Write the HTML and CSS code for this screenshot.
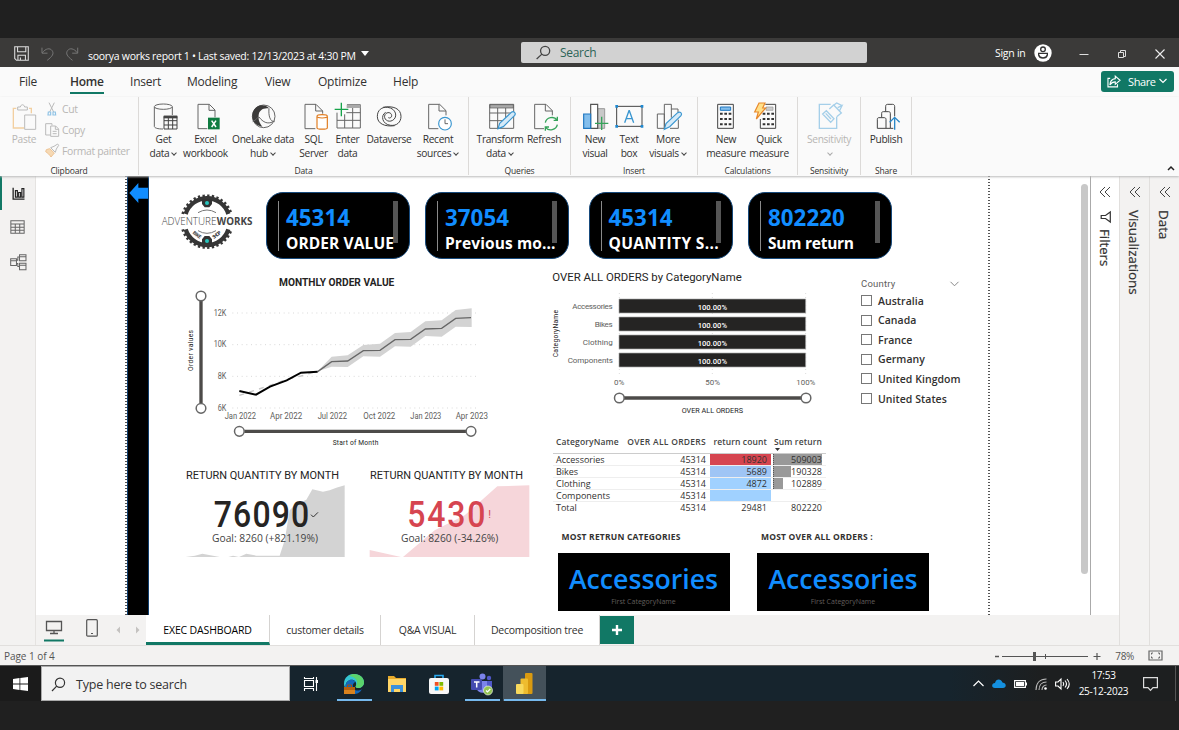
FILE: index.html
```html
<!DOCTYPE html>
<html lang="en">
<head>
<meta charset="utf-8">
<title>soorya works report 1</title>
<link rel="stylesheet" href="styles.css">
</head>
<body>
<div class="screen">
<header class="titlebar">
  <div class="quick">
    <svg width="15" height="15" viewBox="44 50 42 42"><path d="M46 52h38v38H51l-5-5zM54 52v14h23V52M55 90V76h21v14M62 90v-8" class="ln lt"/></svg>
    <svg width="13" height="15" viewBox="122 48 40 44"><path d="M125 52v17h17M126 68c10-14 24-16 30-7 7 9 1 18-15 30" class="ln dim"/></svg>
    <svg width="13" height="15" viewBox="200 48 40 44"><path d="M236 52v17h-17M235 68c-10-14-24-16-30-7-7 9-1 18 15 30" class="ln dim"/></svg>
  </div>
  <div class="doc">soorya works report 1 • Last saved: 12/13/2023 at 4:30 PM</div>
  <svg class="doc-caret" width="8" height="5" viewBox="0 0 8 5"><path d="M0 0h8L4 5z" fill="#fff"/></svg>
  <div class="search"><svg width="15" height="15" viewBox="438 46 46 44"><circle cx="466" cy="63" r="14" class="ln dk"/><path d="M456 73l-16 15" class="ln dk"/></svg>Search</div>
  <div class="account">Sign in
    <svg width="18" height="18" viewBox="0 0 54 54"><circle cx="27" cy="27" r="26" fill="#fff"/><circle cx="27" cy="16" r="7" fill="none" stroke="#333" stroke-width="4"/><path d="M14 28h26v5c-3 12-23 12-26 0z" fill="none" stroke="#333" stroke-width="4"/></svg>
  </div>
  <div class="winbtns">
    <svg width="10" height="10"><path d="M0.500 5.500h9" stroke="#ddd"/></svg>
    <svg width="10" height="10"><path d="M1.500 3.500h5v5h-5zM3.500 3V1.500h5v6H7" fill="none" stroke="#ddd"/></svg>
    <svg width="10" height="10"><path d="M.5.500l9 9M9.500.500l-9 9" stroke="#eee" stroke-width="1.100"/></svg>
  </div>
</header>
<nav class="menu">
  <a class="m1">File</a><a class="m2"><b>Home</b></a><a class="m3">Insert</a><a class="m4">Modeling</a><a class="m5">View</a><a class="m6">Optimize</a><a class="m7">Help</a>
  <button class="share"><svg width="14" height="13" viewBox="980 134 44 38"><path d="M990 143h-7v27h30v-8M1006 136l15 13-15 13v-8c-8 0-12 2-17 10 1-13 7-19 17-20z" class="ln wh"/></svg>Share<svg width="8" height="6" viewBox="0 0 8 6"><path d="M.5 1L4 4.500 7.500 1" fill="none" stroke="#fff" stroke-width="1.200"/></svg></button>
</nav>
<section class="ribbon">
  <div class="group clip off">
    <div class="tools">
      <div class="btn w-paste"><svg class="ic" viewBox="35 217 84 84"><path d="M54 236H45v59h32M92 236h7v15" fill="none" stroke="#f2cfa0" stroke-width="4"/><path d="M58 241v-9h8c2-9 11-9 13 0h8v9zM79 256h33v43H79z" class="ln gl"/></svg><span>Paste</span></div>
      <div class="mini">
        <div><svg width="14" height="14" viewBox="134 217 42 42"><path d="M146 219l14 28M162 219l-14 28" class="ln gl"/><path d="M144 247h7v9h-8zM158 247h7l1 9h-8z" fill="none" stroke="#8fc3e6" stroke-width="3.500"/></svg>Cut</div>
        <div><svg width="14" height="14" viewBox="134 279 42 42"><path d="M150 315h-14v-34h19v5M151 288h15l9 9v22h-24zM165 288v10h10M157 304h12M157 311h12" class="ln gl"/></svg>Copy</div>
        <div><svg width="14" height="14" viewBox="134 340 42 42"><path d="M138 357l10-3 14 13-10 12c-5-8-10-12-16-16z" fill="#f6d9b4" stroke="#eec393" stroke-width="3"/><path d="M151 351l10-4 11-7 3 4-7 11-3 10z" class="ln gl"/></svg>Format painter</div>
      </div>
    </div><div class="glabel">Clipboard</div>
  </div>
  <div class="group g-data">
    <div class="tools">
      <div class="btn w1"><svg class="ic" viewBox="448 217 84 84"><path d="M461 232v58c0 5 10 8 26 8M515 256v-24" class="ln"/><ellipse cx="488" cy="231" rx="27" ry="8" class="ln"/><path d="M490 260h39v38h-39zM490 273h39M490 286h39M503 262v36M516 262v36" class="ln b"/><path d="M489 258h41v8h-41z" fill="#444"/></svg><span>Get<br>data<i></i></span></div>
      <div class="btn w2"><svg class="ic" viewBox="574 217 84 84"><path d="M620 297h-28v-73h34l17 17v22M625 224v18h18" class="ln"/><path d="M622 264h35v35h-35z" fill="#107c41"/><path d="M633 273l13 19M646 273l-13 19" stroke="#fff" stroke-width="4.500"/></svg><span>Excel<br>workbook</span></div>
      <div class="btn w3"><svg class="ic" viewBox="747 217 84 84"><circle cx="791" cy="260" r="34" class="ln"/><path d="M759 246c10-24 37-24 48-10-17-3-30 6-31 20-2 17 3 24 11 35-23-4-36-21-28-45z" fill="#3b3a39"/><path d="M807 236c-2 23 3 40 17 40M777 262c16 22 34 21 46 11M758 276c12-6 14-14 19-14" class="ln"/></svg><span>OneLake data<br>hub<i></i></span></div>
      <div class="btn w4"><svg class="ic" viewBox="898 217 84 84"><path d="M944 297h-31v-73h33l20 20v8M945 224v20h21" class="ln"/><path d="M949 261v33c0 6 31 6 31 0v-33" fill="#fff" stroke="#e07b1e" stroke-width="3.500"/><ellipse cx="964.500" cy="260" rx="15.500" ry="5" fill="#fff" stroke="#e07b1e" stroke-width="3.500"/></svg><span>SQL<br>Server</span></div>
      <div class="btn w5"><svg class="ic" viewBox="1000 217 84 84"><path d="M1009 249v46h70v-70h-40M1009 272h70M1037 249h42M1032 254v41M1056 226v69" class="ln"/><path d="M1038 225h41v10h-41z" fill="#aaa"/><path d="M1022 219v41M1002 239h41" stroke="#16a34a" stroke-width="4"/></svg><span>Enter<br>data</span></div>
      <div class="btn w6"><svg class="ic" viewBox="1125 217 84 84"><path d="M1184 288c-30 4-52-6-52-28 0-18 13-29 31-27 26 3 31 30 15 39-14 8-29-4-23-17 6-10 20-7 20 3 0 5-5 9-10 6M1149 233c30-6 54 4 54 27 0 18-13 29-31 27-26-3-31-30-15-39" class="ln b"/></svg><span>Dataverse</span></div>
      <div class="btn w7"><svg class="ic" viewBox="102 217 84 84"><path d="M145 297h-29v-73h33l19 19v14M147 224v20h21" class="ln"/><circle cx="165" cy="282" r="19" fill="#fff" stroke="#3a96d0" stroke-width="3.500"/><path d="M165 269v13h9" class="ln"/></svg><span>Recent<br>sources<i></i></span></div>
    </div><div class="glabel">Data</div>
  </div>
  <div class="group g-q">
    <div class="tools">
      <div class="btn w8"><svg class="ic" viewBox="288 217 84 84"><path d="M299 224h72v72h-72zM299 250h72M299 273h48M323 235v61M347 235v40" class="ln"/><path d="M300 225h70v10h-70z" fill="#aaa" stroke="#555" stroke-width="2"/><path d="M324 297l5-16 35-33c7-5 15 2 10 9l-34 34z" class="pen"/></svg><span>Transform<br>data<i></i></span></div>
      <div class="btn w9"><svg class="ic" viewBox="420 217 84 84"><path d="M462 297h-28v-73h34l19 19v14M466 224v20h21" class="ln"/><path d="M466 279c3-16 26-21 35-8M502 285c-3 16-26 21-35 8M502 261v11h-11M466 303v-11h11" fill="none" stroke="#35a35a" stroke-width="4"/></svg><span>Refresh</span></div>
    </div><div class="glabel">Queries</div>
  </div>
  <div class="group g-i">
    <div class="tools">
      <div class="btn w10"><svg class="ic" viewBox="573 217 84 84"><path d="M623 237h21v59h-21z" fill="#c8c8c8" stroke="#999" stroke-width="3"/><path d="M602 224h21v72h-21z" fill="#fff" stroke="#555" stroke-width="3.500"/><path d="M581 253h21v43h-21z" fill="#83beec" stroke="#1f77c0" stroke-width="3.500"/><path d="M635 261v40M615 281h40" stroke="#35a35a" stroke-width="4"/></svg><span>New<br>visual</span></div>
      <div class="btn w11"><svg class="ic" viewBox="675 217 84 84"><path d="M680 230h76v60h-76z" class="ln b"/><path d="M704 279l13-36h1l13 36M709 267h18" fill="none" stroke="#3a96d0" stroke-width="4"/><path d="M676 226h8v8h-8zM752 226h8v8h-8zM676 286h8v8h-8zM752 286h8v8h-8z" fill="#1f88d0"/></svg><span>Text<br>box</span></div>
      <div class="btn w12"><svg class="ic" viewBox="792 217 84 84"><path d="M823 296h-21v-43h21zM823 296v-72h21v40M844 238h20v10M865 270v26h-25" class="ln"/><path d="M823 299l5-17 35-33c7-5 15 2 10 9l-34 33z" class="pen"/></svg><span>More<br>visuals<i></i></span></div>
    </div><div class="glabel">Insert</div>
  </div>
  <div class="group g-c">
    <div class="tools">
      <div class="btn w13"><svg class="ic" viewBox="966 217 84 84"><path d="M983 224h47v72h-47z" class="ln b"/><path d="M991 232h31v10h-31z" fill="#83beec" stroke="#1f77c0" stroke-width="3"/><path d="M990 252h34M990 268h34M990 284h34" stroke="#333" stroke-width="6" stroke-dasharray="8 5"/></svg><span>New<br>measure</span></div>
      <div class="btn w14"><svg class="ic" viewBox="1095 217 84 84"><path d="M1126 224h31v72h-46v-28" class="ln b"/><path d="M1128 232h21v10h-21z" fill="#ccc" stroke="#999" stroke-width="2"/><path d="M1118 252h34M1118 268h34M1118 284h34" stroke="#333" stroke-width="6" stroke-dasharray="8 5"/><path d="M1107 220h18l-7 15h9l-28 33 6-21h-11z" fill="#ffe08a" stroke="#e8872a" stroke-width="3.500"/></svg><span>Quick<br>measure</span></div>
    </div><div class="glabel">Calculations</div>
  </div>
  <div class="group g-s off">
    <div class="tools">
      <div class="btn w15"><svg class="ic" viewBox="105 217 84 84"><path d="M152 224h-34v72h52v-34M128 253l11-10 23 24-10 11zM137 251l16 17M148 238l13-12 23 24-14 11M161 227l9-7 16 8M173 234l13-6-8 17" fill="none" stroke="#a5cfe9" stroke-width="4"/></svg><span>Sensitivity<br><i class="solo"></i></span></div>
    </div><div class="glabel">Sensitivity</div>
  </div>
  <div class="group g-p">
    <div class="tools">
      <div class="btn w16"><svg class="ic" viewBox="276 217 84 84"><path d="M292 269c0-4 2-5 5-5h16c3 0 5 2 5 5v27h-26zM305 263v-12c0-4 2-5 5-5h16c3 0 5 2 5 5v45h-13M317 245v-15c0-4 2-6 6-6h15c3 0 6 2 6 6v30M331 296h9" class="ln b"/><path d="M344 300v-37M329 278l15-15 15 15" fill="none" stroke="#2b88c8" stroke-width="4"/></svg><span>Publish</span></div>
    </div><div class="glabel">Share</div>
  </div>
  <svg class="fold" width="8" height="6" viewBox="0 0 8 6"><path d="M1 5l3-3 3 3" fill="none" stroke="#222" stroke-width="1.500"/></svg>
</section>
<main class="work">
  <aside class="rail">
    <svg width="13" height="13" viewBox="34 34 39 40"><path d="M37 36v35h35" fill="none" stroke="#222" stroke-width="4"/><path d="M44 45h6v20h-6zM54 51h6v14h-6zM64 39h6v26h-6z" fill="none" stroke="#222" stroke-width="3.500"/></svg>
    <svg width="15" height="14" viewBox="33 137 43 41"><path d="M35 139h39v37H35zM35 149h39M35 158h39M35 167h39M48 149v27M61 149v27" class="ln"/></svg>
    <svg width="17" height="17" viewBox="30 238 50 50"><path d="M32 252h17v20H32zM32 258h17M58 240h19v18H58zM58 246h19M58 265h19v19H58zM58 271h19M49 256h4v-9h5M49 266h4v9h5" class="ln"/></svg>
  </aside>
  <div class="center">
    <div class="stage">
      <div class="canvas">
        <div class="dots left"></div><div class="dots right"></div>
        <div class="bar"><svg width="19" height="20" viewBox="386 23 57 60"><path d="M387 53l27-30v14h29v33h-29v13z" fill="#118dff"/></svg></div>
        <svg class="logo" width="96" height="60" viewBox="480 55 288 180">
          <g fill="none" stroke="#363636">
            <path d="M557 118a67 67 0 0 1 128 0M557 164a67 67 0 0 0 128 0" stroke-width="13"/>
            <path d="M548 118a76 76 0 0 1 146 0M548 164a76 76 0 0 0 146 0" stroke-width="8" stroke-dasharray="7 7"/>
            <path d="M594 114q27-16 54 0M594 168q27 16 54 0" stroke="#777" stroke-width="3"/>
          </g>
          <path d="M606 74h30v14l-8 10h-14l-8-10zM606 208h30v-14l-8-10h-14l-8 10z" fill="#333"/>
          <circle cx="621" cy="85" r="6" fill="#27c5bd"/><circle cx="621" cy="199" r="6" fill="#27c5bd"/>
          <g class="sans" fill="#444"><text x="485" y="151" font-size="31" font-weight="300" textLength="164" lengthAdjust="spacingAndGlyphs">ADVENTURE</text><text x="650" y="151" font-size="31" font-weight="700" textLength="107" lengthAdjust="spacingAndGlyphs">WORKS</text>
          <text transform="translate(577 176) rotate(38)" font-size="15" font-weight="700" textLength="28">BIKE</text><text transform="translate(642 193) rotate(-38)" font-size="15" font-weight="700" textLength="28">SHOP</text></g>
        </svg>
        <article class="card c1"><div><b>45314</b><span>ORDER VALUE</span></div></article>
        <article class="card c2"><div><b>37054</b><span>Previous mo...</span></div></article>
        <article class="card c3"><div><b>45314</b><span>QUANTITY S...</span></div></article>
        <article class="card c4"><div><b>802220</b><span>Sum return</span></div></article>

        <svg class="trend din" width="340" height="185" viewBox="0 -60 1020 555">
          <text x="327" y="-13" font-size="31" font-weight="700" fill="#252423" textLength="346" lengthAdjust="spacingAndGlyphs">MONTHLY ORDER VALUE</text>
          <path d="M187 69h738M187 164h738M187 259h738M187 354h738" stroke="#d9d9d9" stroke-width="3" stroke-dasharray="3 11"/>
          <g font-size="25" fill="#605e5c"><text x="131" y="77" textLength="38" lengthAdjust="spacingAndGlyphs">12K</text><text x="131" y="172" textLength="38" lengthAdjust="spacingAndGlyphs">10K</text><text x="143" y="266" textLength="26" lengthAdjust="spacingAndGlyphs">8K</text><text x="143" y="362" textLength="26" lengthAdjust="spacingAndGlyphs">6K</text>
          <text x="164" y="386" textLength="94" lengthAdjust="spacingAndGlyphs">Jan 2022</text><text x="300" y="386" textLength="97" lengthAdjust="spacingAndGlyphs">Apr 2022</text><text x="443" y="386" textLength="88" lengthAdjust="spacingAndGlyphs">Jul 2022</text><text x="580" y="386" textLength="96" lengthAdjust="spacingAndGlyphs">Oct 2022</text><text x="721" y="386" textLength="93" lengthAdjust="spacingAndGlyphs">Jan 2023</text><text x="857" y="386" textLength="97" lengthAdjust="spacingAndGlyphs">Apr 2023</text></g>
          <text x="488" y="466" font-size="20" fill="#252423" textLength="137">Start of Month</text>
          <text transform="translate(70 243) rotate(-90)" font-size="20" fill="#252423" textLength="123">Order values</text>
          <path d="M443 244l42-44 48-4 47-31 50-4 45-32 47-3 44-32 49-3 42-31 48-5v56l-48-1-42 30-49-2-44 32-47-1-45 31-50-1-47 32-48-1z" fill="#d3d3d3"/>
          <path d="M208 316l50-16 42-14 50-18 43-10 50-15" fill="none" stroke="#c8c8c8" stroke-width="4" stroke-dasharray="15 16"/>
          <path d="M443 245l42-30 48-2 47-31 50-1 45-32 47-1 44-31 49-2 42-30 46-2" fill="none" stroke="#666" stroke-width="4"/>
          <path d="M208 303l50 11 42-24 50-19 43-23 50-3" fill="none" stroke="#000" stroke-width="6"/>
          <g stroke="#4d4b49" fill="none"><path d="M93 33v307M223 424h665" stroke-width="10"/><g fill="#fff" stroke="#666" stroke-width="4.500"><circle cx="93" cy="18" r="14.500"/><circle cx="93" cy="355" r="14.500"/><circle cx="208" cy="424" r="14.500"/><circle cx="903" cy="424" r="14.500"/></g></g>
        </svg>

        <svg class="bars din" width="300" height="160" viewBox="0 0 900 480">
          <text x="37" y="47" font-size="34" fill="#252423" textLength="568" lengthAdjust="spacingAndGlyphs">OVER ALL ORDERS by CategoryName</text>
          <path d="M238 84v250M517 84v250M797 84v250" stroke="#ddd" stroke-width="3" stroke-dasharray="3 9"/>
          <path d="M237 102h560v42H237zM237 156h560v42H237zM237 210h560v42H237zM237 264h560v42H237z" fill="#252423" stroke="#aaa" stroke-width="2"/>
          <g font-size="24" fill="#605e5c"><text x="97" y="131" textLength="121">Accessories</text><text x="164" y="186" textLength="54">Bikes</text><text x="128" y="240" textLength="90">Clothing</text><text x="83" y="294" textLength="136">Components</text><text x="222" y="359" textLength="31" lengthAdjust="spacingAndGlyphs">0%</text><text x="496" y="359" textLength="44" lengthAdjust="spacingAndGlyphs">50%</text><text x="769" y="359" textLength="57" lengthAdjust="spacingAndGlyphs">100%</text></g>
          <g font-size="24" fill="#fff" font-weight="500"><text x="473" y="135" textLength="88" lengthAdjust="spacingAndGlyphs">100.00%</text><text x="473" y="189" textLength="88" lengthAdjust="spacingAndGlyphs">100.00%</text><text x="473" y="243" textLength="88" lengthAdjust="spacingAndGlyphs">100.00%</text><text x="473" y="297" textLength="88" lengthAdjust="spacingAndGlyphs">100.00%</text></g>
          <text x="425" y="443" font-size="21" fill="#252423" textLength="184" lengthAdjust="spacingAndGlyphs">OVER ALL ORDERS</text>
          <text transform="translate(54 277) rotate(-90)" font-size="20" fill="#252423" textLength="142">CategoryName</text>
          <path d="M250 399h535" stroke="#4d4b49" stroke-width="10"/><g fill="#fff" stroke="#666" stroke-width="4.500"><circle cx="238" cy="399" r="14.500"/><circle cx="798" cy="399" r="14.500"/></g>
        </svg>

        <section class="slicer">
          <h3>Country<svg width="9" height="6" viewBox="0 0 9 6"><path d="M.5.800L4.500 4.800 8.500.800" fill="none" stroke="#888"/></svg></h3>
          <label><i></i>Australia</label><label><i></i>Canada</label><label><i></i>France</label><label><i></i>Germany</label><label><i></i>United Kingdom</label><label><i></i>United States</label>
        </section>

        <svg class="kpi k1 din" width="170" height="100" viewBox="40 20 510 300">
          <path d="M48 290L76 286 98 280 130 286 150 290 176 290 190 286 208 290 230 280 260 286 300 286 330 286 345 240 360 150 375 135 410 118 428 87 460 94 480 90 500 82 525 75V290z" fill="#d3d3d3"/>
          <text x="49" y="56" font-size="33" fill="#252423" textLength="459" lengthAdjust="spacingAndGlyphs">RETURN QUANTITY BY MONTH</text>
          <text transform="translate(132 201) scale(.88 1)" font-size="109" font-weight="500" fill="#252423" textLength="326">76090</text>
          <path d="M424 163l7 7 14-14" fill="none" stroke="#333" stroke-width="3"/>
          <text class="sans" x="127" y="246" font-size="30" fill="#444" textLength="318" lengthAdjust="spacingAndGlyphs">Goal: 8260 (+821.19%)</text>
        </svg>
        <svg class="kpi k2 din" width="170" height="100" viewBox="590 20 510 300">
          <path d="M598 269l94 21h6l95-80 90-45 98-87 96-3v215H598z" fill="#f6d6da"/>
          <text x="599" y="56" font-size="33" fill="#252423" textLength="459" lengthAdjust="spacingAndGlyphs">RETURN QUANTITY BY MONTH</text>
          <text transform="translate(711 201) scale(.88 1)" font-size="109" font-weight="500" fill="#d64550" textLength="266">5430</text>
          <text x="954" y="173" font-size="32" fill="#d64550">!</text>
          <text class="sans" x="692" y="246" font-size="30" fill="#444" textLength="292" lengthAdjust="spacingAndGlyphs">Goal: 8260 (-34.26%)</text>
        </svg>

        <table class="matrix">
          <thead><tr><th>CategoryName</th><th>OVER ALL ORDERS</th><th>return count</th><th>Sum return</th></tr></thead>
          <tbody>
            <tr><td>Accessories</td><td>45314</td><td class="hot">18920</td><td class="db"><i style="width:49px"></i><span>509003</span></td></tr>
            <tr><td>Bikes</td><td>45314</td><td class="mid">5689</td><td class="db"><i style="width:18px"></i><span>190328</span></td></tr>
            <tr><td>Clothing</td><td>45314</td><td class="cool">4872</td><td class="db"><i style="width:10px"></i><span>102889</span></td></tr>
            <tr><td>Components</td><td>45314</td><td class="cool"></td><td></td></tr>
          </tbody>
          <tfoot><tr><td>Total</td><td>45314</td><td>29481</td><td>802220</td></tr></tfoot>
        </table>
        <svg class="sortmark" width="5" height="3"><path d="M0 0h5L2.500 3z" fill="#333"/></svg>
        <section class="top t1"><h3>MOST RETRUN CATEGORIES</h3><div><b>Accessories</b><span>First CategoryName</span></div></section>
        <section class="top t2"><h3>MOST OVER ALL ORDERS :</h3><div><b>Accessories</b><span>First CategoryName</span></div></section>
        <div class="vscroll"></div>
      </div>
      <aside class="pane filters"><svg class="chev" viewBox="0 0 12 12"><path d="M6 1L1 6l5 5M11 1L6 6l5 5"/></svg><svg width="11" height="12" viewBox="0 0 11 12"><path d="M10.300 1v10L5.500 7.500H1.200v-3h4.300z" fill="none" stroke="#333" stroke-width="1.200"/></svg><span>Filters</span></aside>
    </div>
    <div class="pages">
      <div class="views">
        <svg class="desk" width="18" height="22" viewBox="0 0 18 22"><path d="M1.500.500h15v9h-15zM9 9.500v3M5 12.500h8" fill="none" stroke="#555" stroke-width="1.300"/><path d="M-1 18.500h20v2H-1z" fill="#117865"/></svg>
        <svg width="12" height="18" viewBox="0 0 12 18"><rect x=".7" y=".7" width="10.600" height="16.500" rx="1" fill="none" stroke="#555" stroke-width="1.200"/><path d="M5 14.500h2" stroke="#555"/></svg>
        <svg width="24" height="8" viewBox="0 0 24 8"><path d="M4 .5v7L.5 4zM20 .5v7L23.500 4z" fill="#c4c2c0"/></svg>
      </div>
      <a class="p1 cur">EXEC DASHBOARD</a><a class="p2">customer details</a><a class="p3">Q&amp;A VISUAL</a><a class="p4">Decomposition tree</a><button class="add"><svg width="10" height="10"><path d="M5 0v10M0 5h10" stroke="#fff" stroke-width="2.400"/></svg></button>
    </div>
  </div>
  <aside class="pane viz"><svg class="chev" viewBox="0 0 12 12"><path d="M6 1L1 6l5 5M11 1L6 6l5 5"/></svg><span>Visualizations</span></aside>
  <aside class="pane dat"><svg class="chev" viewBox="0 0 12 12"><path d="M6 1L1 6l5 5M11 1L6 6l5 5"/></svg><span>Data</span></aside>
</main>
<footer class="status">
  <span>Page 1 of 4</span>
  <div class="zoomer"><svg width="110" height="12" viewBox="0 0 110 12"><path d="M1 6.500h4" stroke="#555" stroke-width="1.500"/><path d="M8 6.500h86M51.500 4v5" stroke="#555"/><path d="M39 2h3v9h-3z" fill="#555"/><path d="M99.500 6.500h7M103 3v7" stroke="#555" stroke-width="1.200"/></svg><span>78%</span><svg width="15" height="11" viewBox="0 0 15 11"><path d="M1 1h13v9H1z" fill="none" stroke="#666" stroke-width="1.200"/><path d="M3.500 4.500v-1.500H5M10 3h1.500v1.500M11.500 6.500V8H10M5 8H3.500V6.500" fill="none" stroke="#666"/></svg></div>
</footer>
<footer class="taskbar">
  <div class="start"><svg width="15" height="14" viewBox="0 0 15 14"><path d="M0 2l6.500-1v5.600H0zM7.300.900L15 0v6.600H7.300zM0 7.400h6.500V13L0 12zM7.300 7.400H15V14l-7.700-1z" fill="#fff"/></svg></div>
  <div class="find"><svg width="15" height="15" viewBox="0 0 15 15"><circle cx="9" cy="5.800" r="4.600" fill="none" stroke="#333" stroke-width="1.200"/><path d="M5.700 9.200L1 14" stroke="#333" stroke-width="1.200"/></svg>Type here to search</div>
  <div class="apps">
    <div><svg width="16" height="16" viewBox="0 0 16 16"><path d="M1.500 4.500h9v6h-9zM1.500 1v1.500h9V1M1.500 15v-2.500h9V15M13.500 1v14" fill="none" stroke="#fff" stroke-width="1.100"/><path d="M12.500 4h2.500v3h-2.500z" fill="#fff"/></svg></div>
    <div class="run"><svg width="22" height="22" viewBox="0 0 22 22"><path d="M1 11C1 4 6 1 11 1c6 0 10 4 10 8.500C21 13 18 15 15 15c-2 0-3-1-2-2.500C14 9 11 6 7 7c-3 1-6 4-3 10C2 15 1 13 1 11z" fill="#35c5d3"/><path d="M11 1c6 0 10 4 10 8.500C21 13 18 15 15 15c-2 0-3-1-2-2.500 3-3 0-9-7-9.500C8 1.500 9 1 11 1z" fill="#5bd36b"/><path d="M4 9c3-4 8-2 8.500 0C9 10 9 15 12 17c3 1 5 .5 7-1-2 4-5 5-8 5C3 21 0 14 4 9z" fill="#1467ba"/><path d="M1 14h11v7H1z" fill="#d9821e"/><path d="M1 14h11v3H1z" fill="#b5600e"/><path d="M4.500 14v-2h4v2" fill="none" stroke="#a4540a"/></svg></div>
    <div><svg width="20" height="18" viewBox="0 0 20 18"><path d="M1 1h6l2 2h10v13H1z" fill="#e8ab2c"/><path d="M1 4h18v13H1z" fill="#ffd667"/><path d="M4 17v-7h12v7h-3v-3H7v3z" fill="#3c91dc"/></svg></div>
    <div><svg width="20" height="20" viewBox="0 0 20 20"><path d="M6 5V1.500h8V5" fill="none" stroke="#2aa9ee" stroke-width="1.600"/><rect y="4" width="20" height="16" rx="2" fill="#f7f7f7"/><path d="M5.800 8h3.800v3.800H5.800z" fill="#f25022"/><path d="M10.400 8h3.800v3.800h-3.800z" fill="#7fba00"/><path d="M5.800 12.600h3.800v3.800H5.800z" fill="#00a4ef"/><path d="M10.400 12.600h3.800v3.800h-3.800z" fill="#ffb900"/></svg></div>
    <div class="run"><svg width="22" height="22" viewBox="0 0 22 22"><circle cx="11.500" cy="3.500" r="3" fill="#7b83eb"/><circle cx="18" cy="5" r="2.200" fill="#5059c9"/><path d="M14 8h7v7c0 3-4 4-7 2z" fill="#5059c9"/><path d="M6 8h10v8c0 5-9 5-10 0z" fill="#7b83eb"/><rect y="6" width="11" height="11" rx="1" fill="#444bb0"/><path d="M3 9h5.500M5.700 9v5.500" stroke="#fff" stroke-width="1.500"/><circle cx="17" cy="17.500" r="4.500" fill="#92c353" stroke="#fff" stroke-width=".6"/><path d="M15 17.500l1.500 1.500 2.800-3" fill="none" stroke="#fff" stroke-width="1.200"/></svg></div>
    <div class="run act"><svg width="18" height="22" viewBox="0 0 18 22"><rect x="9" y="0" width="7.500" height="21" rx="1" fill="#d99a10"/><rect x="4.500" y="5.500" width="7.500" height="15.500" rx="1" fill="#eebc2f"/><rect x="0" y="11" width="7.500" height="10" rx="1" fill="#f8d95c"/></svg></div>
  </div>
  <div class="tray">
    <svg width="11" height="7" viewBox="0 0 11 7"><path d="M.5 6l5-5 5 5" fill="none" stroke="#fff" stroke-width="1.200"/></svg>
    <svg width="14" height="9" viewBox="0 0 14 9"><path d="M3 9C-1 9-.5 4 3 4 4-.500 9-.500 10.500 3.500 15 4 14.500 9 11 9z" fill="#1490df"/></svg>
    <svg width="13" height="8" viewBox="0 0 13 8"><path d="M.6.600h10.800v6.800H.6z" fill="none" stroke="#fff" stroke-width="1.100"/><path d="M2 2h8v4H2zM12 2.500h1v3h-1z" fill="#fff"/></svg>
    <svg width="12" height="12" viewBox="0 0 12 12"><path d="M1 12C1 5 5 1 11.500 1M4 12c0-5 3-8 7.500-8M7 12c0-3 2-5 4.500-5" fill="none" stroke="#bbb" stroke-width="1.100"/><circle cx="10.500" cy="10.500" r="1.300" fill="#fff"/></svg>
    <svg width="15" height="12" viewBox="0 0 15 12"><path d="M.6 4h2.400l3-3v10l-3-3H.6zM8 4q1.500 2 0 4M10 2.500q3 3.500 0 7M12 1q4.500 5 0 10" fill="none" stroke="#fff" stroke-width="1.100"/></svg>
    <div class="clock">17:53<br>25-12-2023</div>
    <svg class="note" width="15" height="14" viewBox="0 0 15 14"><path d="M.6.600h13.800v10H10l-2.500 2.800L5 10.600H.6z" fill="none" stroke="#ddd" stroke-width="1.200"/></svg>
  </div>
</footer>
</div>
</body>
</html>
```
FILE: styles.css
```css
* { box-sizing: border-box; }
body { margin: 0; background: #202020; font-family: "Open Sans", "Noto Sans", sans-serif; color: #323130; }
.screen { width: 1179px; height: 730px; padding-top: 38px; display: flex; flex-direction: column; overflow: hidden; }
svg { display: block; flex: none; overflow: visible; }
button { border: 0; padding: 0; font: inherit; }
.ln { fill: none; stroke: #666; stroke-width: 3; }
.ln.b { stroke: #444; }
.ln.lt { stroke: #ddd; }
.ln.dim { stroke: #777; }
.ln.dk { stroke: #444; stroke-width: 4; }
.ln.wh { stroke: #fff; stroke-width: 3.500; }
.ln.gl { stroke: #bbb; }
.pen { fill: #d5eaf8; stroke: #3a96d0; stroke-width: 3.500; }
.sans { font-family: "Open Sans", sans-serif; }
.din { font-family: Roboto, sans-serif; }

.titlebar { height: 29px; flex: none; background: #3b3a39; color: #fff; display: flex; align-items: center; font-size: 10.500px; white-space: nowrap; }
.quick { display: flex; gap: 12px; width: 88px; padding: 2px 0 0 14px; }
.doc { width: 273px; letter-spacing: -.28px; padding-top: 6px; }
.doc-caret { margin-top: 2px; }
.search { margin-left: 152px; width: 346px; height: 21px; background: #d2d2d2; border-radius: 2px; display: flex; align-items: center; gap: 9px; padding: 0 0 0 15px; font-size: 12px; letter-spacing: -.3px; color: #2c6457; }
.account { margin-left: 128px; display: flex; align-items: center; gap: 9px; width: 78px; padding-top: 1px; letter-spacing: -.27px; }
.winbtns { margin-left: 6px; padding-top: 2px; display: flex; gap: 28px; }

.menu { height: 30px; flex: none; background: #fafafa; display: flex; align-items: center; padding-left: 19px; font-size: 12px; letter-spacing: -.22px; }
.menu a { height: 100%; padding-top: 6px; line-height: 17px; }
.menu b { display: inline-block; height: 21px; border-bottom: 2px solid #117865; font-weight: 600; letter-spacing: -.3px; }
.m1 { width: 51px; } .m2 { width: 60px; } .m3 { width: 57px; } .m4 { width: 78px; } .m5 { width: 53px; } .m6 { width: 75px; }
.share { margin-left: auto; margin-right: 5px; margin-bottom: 2px; width: 73px; height: 21px; border-radius: 3px; background: #117865; color: #fff; display: flex; align-items: center; padding-left: 6px; font-size: 11px; gap: 7px; letter-spacing: -.4px; }
.share svg:last-child { margin-left: -4px; }

.ribbon { height: 79px; flex: none; background: #fafafa; display: flex; position: relative; z-index: 2; box-shadow: 0 1px 2px #bbb; }
.group { display: flex; flex-direction: column; border-right: 1px solid #dcdad8; height: 78px; }
.tools { display: flex; height: 67px; flex: none; padding-top: 5px; }
.btn { display: flex; flex-direction: column; align-items: center; text-align: center; font-size: 10.200px; line-height: 14px; letter-spacing: -.32px; white-space: nowrap; }
.btn .ic { width: 28px; height: 28px; margin-bottom: 2px; }
.btn i { display: inline-block; width: 4px; height: 4px; border: solid #444; border-width: 0 1.200px 1.200px 0; transform: rotate(45deg); margin: 0 1px 2px 3px; }
.off .btn, .off .mini { color: #b8b6b4; }
.off .btn i { border-color: #aaa; }
.glabel { flex: none; font-size: 8.500px; line-height: 13px; text-align: center; letter-spacing: -.15px; }
.clip { width: 139px; }
.w-paste { width: 36px; margin-left: 6px; }
.mini { display: flex; flex-direction: column; gap: 7px; margin-left: 3px; font-size: 10.400px; line-height: 14px; letter-spacing: -.35px; white-space: nowrap; }
.mini div { display: flex; gap: 3px; align-items: center; }
.g-data { width: 330px; padding-left: 6px; } .g-data .glabel { padding-right: 6px; }
.g-q { width: 102px; padding-left: 6px; } .g-q .glabel { padding-right: 6px; }
.g-i { width: 127px; padding-left: 7px; } .g-i .glabel { padding-right: 7px; }
.g-c { width: 100px; padding-left: 7px; } .g-c .glabel { padding-right: 7px; }
.g-s { width: 63px; padding-left: 6px; } .g-s .glabel { padding-right: 6px; }
.g-p { width: 51px; padding-left: 5px; } .g-p .glabel { padding-right: 5px; }
.w1 { width: 37px; } .w2 { width: 47px; } .w3 { width: 68px; } .w4 { width: 33px; } .w5 { width: 35px; } .w6 { width: 48px; } .w7 { width: 50px; }
.w8 { width: 50px; } .w9 { width: 38px; } .w10, .w11 { width: 34px; } .w12 { width: 44px; } .w13 { width: 42px; } .w14 { width: 44px; } .w15 { width: 50px; } .w16 { width: 40px; }
.fold { margin: auto 4px 5px auto; }

.work { height: 469px; flex: none; display: flex; background: #f3f2f1; }
.rail { width: 36px; border-right: 1px solid #e5e3e1; padding: 11px 0 0 10px; display: flex; flex-direction: column; gap: 20px; background: linear-gradient(#117865, #117865) 0 0 / 2px 34px no-repeat, #f3f2f1; }
.rail svg:first-child { margin-left: 1.500px; }
.center { width: 1083px; }
.stage { height: 439px; display: flex; }
.canvas { width: 1054px; height: 439px; position: relative; overflow: hidden; background: #fff; }
.canvas > * { position: absolute; }
.dots { width: 2px; height: 439px; background: repeating-linear-gradient(#555 0 1.500px, #fff 1.500px 3px); }
.dots.left { left: 89px; } .dots.right { left: 952px; }
.bar { left: 91px; top: 0; width: 22px; height: 439px; background: #000; border: solid #0f3f70; border-width: 0 1px; }
.bar svg { margin: 7px 0 0 1px; }
.logo { left: 124px; top: 17px; }
.card { top: 16px; width: 144px; height: 67px; border-radius: 17px; background: #000; border: 1px solid #174a7c; }
.card div { margin: 8px 11px 0; height: 50px; border-left: 1.500px solid #8a8a8a; padding-left: 7px; display: flex; flex-direction: column; background: linear-gradient(#555, #555) right 0 top 0 / 5px 42px no-repeat; }
.card b { font-size: 22.300px; line-height: 25px; margin-top: 4px; color: #118dff; letter-spacing: .05px; }
.card span { font-size: 15.500px; line-height: 22px; margin-top: 2px; font-weight: 700; color: #fff; white-space: nowrap; letter-spacing: .1px; }
.c1 { left: 230px; } .c2 { left: 389px; } .c3 { left: 552.500px; } .c4 { left: 712px; }
.card.c3 span { letter-spacing: .35px; }
.card.c4 span { letter-spacing: -.25px; }
.trend { left: 134px; top: 94px; }
.bars { left: 504px; top: 89px; }
.slicer { left: 825px; top: 101px; width: 100px; font-size: 10.500px; font-weight: 600; }
.slicer h3 { margin: 0; font: 9.500px/14px Roboto, sans-serif; letter-spacing: .2px; color: #605e5c; display: flex; justify-content: space-between; align-items: center; padding-right: 2px; }
.slicer label { display: flex; align-items: center; gap: 6px; height: 19.550px; white-space: nowrap; letter-spacing: .05px; }
.slicer i { width: 11px; height: 11px; border: 1px solid #777; flex: none; }
.kpi { top: 291px; } .k1 { left: 147.300px; } .k2 { left: 330.700px; }
.matrix { left: 517px; top: 259px; width: 273px; border-collapse: collapse; table-layout: fixed; font: 9px/11px "Open Sans", sans-serif; white-space: nowrap; }
.matrix th { width: 61px; height: 18px; padding: 0 4px 4px 0; text-align: right; font-weight: 600; font-size: 8.500px; letter-spacing: .12px; color: #444; border-bottom: 1px solid #ccc; }
.matrix th:nth-child(1) { width: 69px; text-align: left; padding-left: 3px; padding-right: 0; }
.matrix th:nth-child(2) { width: 88px; letter-spacing: .27px; }
.matrix th:nth-child(4) { width: 55px; }
.matrix td { height: 12px; padding: 0 4px 0 0; text-align: right; border-bottom: 1px solid #eee; }
.matrix td:first-child { text-align: left; padding-left: 3px; }
.matrix tfoot td { border: 0; }
.hot { background: #d64550; } .mid { background: #9fc5f5; } .cool { background: #a0d1ff; }
.db { position: relative; }
.db i { position: absolute; left: 2px; top: 0; height: 11px; background: #999; border-left: 1px dotted #555; }
.db span { position: relative; }
.sortmark { left: 739px; top: 272px; }
.top { width: 172px; top: 354px; }
.top h3 { margin: 0 0 10px 4px; font: 700 8.500px/13px "Open Sans", sans-serif; letter-spacing: .2px; white-space: nowrap; }
.top div { height: 58px; background: #000; text-align: center; display: flex; flex-direction: column; }
.top b { font-size: 26.700px; font-weight: 600; line-height: 36px; margin-top: 8px; color: #118dff; }
.top span { font-size: 7px; line-height: 10px; color: #605e5c; }
.t1 { left: 521.500px; } .t2 { left: 721px; }
.vscroll { left: 1045px; top: 8px; width: 7px; height: 390px; border-radius: 4px; background: #c8c8c8; }

.pane { width: 30px; display: flex; flex-direction: column; align-items: center; padding-top: 10px; border-left: 1px solid #e1dfdd; }
.pane span { writing-mode: vertical-rl; font-size: 13.400px; line-height: 18px; margin-right: 2px; -webkit-text-stroke: .2px #323130; }
.chev { width: 12px; height: 12px; fill: none; stroke: #444; margin-bottom: 12px; }
.filters { width: 29px; background: #fff; border-left-color: #aaa; }
.filters .chev { margin-bottom: 13px; }
.filters span { margin-top: 6px; font-size: 13.200px; margin-right: 1px; }
.viz, .dat { height: 469px; background: #f3f2f1; }

.pages { height: 30px; display: flex; background: #f3f2f1; font-size: 10.500px; letter-spacing: -.25px; }
.views { width: 110px; display: flex; align-items: center; padding-left: 9px; }
.desk { margin-top: 4px; }
.views svg:nth-child(2) { margin: -5px 18px 0 23px; }
.pages a { background: #fff; border-right: 1px solid #d5d3d1; text-align: center; line-height: 30px; white-space: nowrap; }
.pages .cur { border-bottom: 3px solid #117865; color: #000; letter-spacing: -.15px; }
.p1 { width: 124px; } .p2 { width: 111px; } .p3 { width: 94px; } .p4 { width: 125px; }
.add { width: 34px; height: 28px; margin-top: 1px; background: #117865; display: grid; place-items: center; }

.status { height: 20px; flex: none; background: #f3f2f1; border-top: 1px solid #e1dfdd; display: flex; justify-content: space-between; align-items: center; padding: 0 16px 0 4px; font-size: 10px; letter-spacing: -.05px; color: #555; }
.zoomer { display: flex; align-items: center; }
.zoomer span { margin: 0 14px 0 11px; letter-spacing: -.35px; }

.taskbar { height: 36px; flex: none; display: flex; background: linear-gradient(90deg, #16242d 0 950px, #1d1f20 1040px); border-top: 1px solid #555; color: #fff; }
.start { width: 41px; background: #1b1b1b; display: grid; place-items: center; }
.find { width: 249px; background: #f2f2f2; border: 1px solid #aaa; color: #333; display: flex; align-items: center; gap: 10px; padding: 1px 0 0 9px; font-size: 12.500px; letter-spacing: -.22px; }
.apps { display: flex; }
.apps div { width: 42.700px; display: grid; place-items: center; }
.apps .run { background: linear-gradient(#76b9ed, #76b9ed) center bottom / 35px 2px no-repeat; }
.apps .act { background: linear-gradient(#76b9ed, #76b9ed) center bottom / 42px 2px no-repeat, #44515a; }
.tray { margin-left: auto; display: flex; align-items: center; gap: 8px; padding-right: 5px; border-right: 1px solid #555; margin-right: 3px; }
.clock { width: 51px; font-size: 10px; line-height: 15.500px; text-align: center; white-space: nowrap; letter-spacing: -.25px; }
.note { margin: 0 12px 0 6px; }
```
